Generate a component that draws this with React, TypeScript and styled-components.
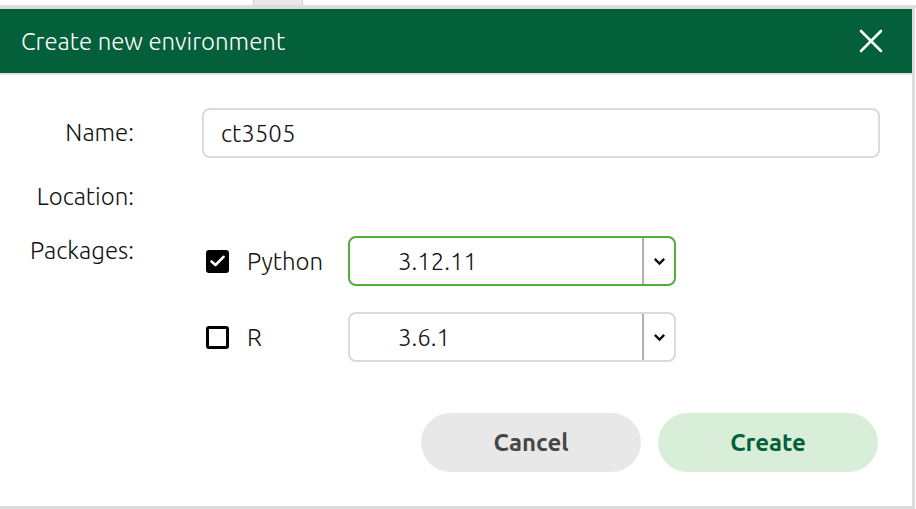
import { useState } from 'react'
import styled, { createGlobalStyle } from 'styled-components'

const GlobalStyle = createGlobalStyle`
  html, body {
    margin: 0;
    padding: 0;
    background: #ffffff;
    overflow: hidden;
  }
  body {
    font-family: Ubuntu, "Open Sans", "Noto Sans", sans-serif;
    color: #1b1b1b;
  }
  * {
    box-sizing: border-box;
  }
`

// Page that sits behind the modal, only its edges show
const Page = styled.div`
  position: relative;
  width: 916px;
  height: 509px;
  background: #ffffff;
`

const PageTopBar = styled.div`
  display: flex;
  height: 8px;
  padding-left: 253px;
  border-bottom: 3px solid #dcdcdc;
`

const PageTab = styled.div`
  width: 50px;
  height: 100%;
  background: #e8e8e8;
  border-left: 1px solid #d0d0d0;
  border-right: 1px solid #d0d0d0;
`

const PageSide = styled.div`
  position: absolute;
  top: 0;
  right: 0;
  width: 4px;
  height: 100%;
  display: flex;
  flex-direction: column;
  gap: 60px;
  padding-top: 200px;
`

const SideMark = styled.div<{ $color: string }>`
  width: 3px;
  height: 9px;
  background: ${({ $color }) => $color};
`

const Dialog = styled.div`
  position: absolute;
  top: 6px;
  left: -3px;
  width: 918px;
  height: 503px;
  display: flex;
  flex-direction: column;
  background: #ffffff;
  border: 3px solid #dcdcdc;
`

const Header = styled.div`
  display: flex;
  align-items: center;
  justify-content: space-between;
  height: 66px;
  padding: 0 28px 0 21px;
  background: #03603a;
  border-bottom: 2px solid #e2e2e2;
`

const Title = styled.h1`
  margin: 0;
  font-size: 24px;
  font-weight: 300;
  color: #ffffff;
`

const CloseButton = styled.button`
  display: flex;
  align-items: center;
  justify-content: center;
  width: 26px;
  height: 26px;
  padding: 0;
  border: none;
  background: transparent;
  cursor: pointer;
`

const Body = styled.div`
  display: flex;
  flex-direction: column;
  flex: 1;
  padding: 33px 32px 0 0;
`

const FieldRow = styled.div<{ $gapTop: number }>`
  display: grid;
  grid-template-columns: 134px 1fr;
  column-gap: 68px;
  align-items: center;
  margin-top: ${({ $gapTop }) => $gapTop}px;
`

const Label = styled.div<{ $alignTop?: boolean }>`
  text-align: right;
  font-size: 24px;
  font-weight: 300;
  line-height: 30px;
  color: #111111;
  align-self: ${({ $alignTop }) => ($alignTop ? 'start' : 'center')};
`

const TextInput = styled.input`
  height: 50px;
  width: 100%;
  padding: 0 17px;
  border: 2px solid #dadada;
  border-radius: 8px;
  font-family: inherit;
  font-size: 24px;
  font-weight: 300;
  color: #111111;
  outline: none;
`

const PackageList = styled.div`
  display: flex;
  flex-direction: column;
  gap: 26px;
`

const PackageRow = styled.div`
  display: grid;
  grid-template-columns: 146px 328px;
  align-items: center;
`

const CheckLabel = styled.label`
  display: flex;
  align-items: center;
  gap: 18px;
  padding-left: 4px;
  font-size: 24px;
  font-weight: 300;
  color: #111111;
  cursor: pointer;
`

const Box = styled.span<{ $checked: boolean }>`
  display: flex;
  align-items: center;
  justify-content: center;
  width: 23px;
  height: 23px;
  border-radius: 3px;
  border: 3px solid #000000;
  background: ${({ $checked }) => ($checked ? '#000000' : '#ffffff')};
`

const Select = styled.div<{ $focused: boolean }>`
  display: flex;
  height: 50px;
  border: 2px solid ${({ $focused }) => ($focused ? '#4fae3c' : '#dadada')};
  border-radius: 8px;
  overflow: hidden;
`

const SelectValue = styled.div`
  flex: 1;
  display: flex;
  align-items: center;
  padding-left: 48px;
  font-size: 24px;
  font-weight: 300;
  color: #111111;
`

const SelectArrow = styled.div`
  display: flex;
  align-items: center;
  justify-content: center;
  width: 32px;
  border-left: 2px solid #b0b0b0;
`

const Footer = styled.div`
  display: flex;
  justify-content: flex-end;
  gap: 17px;
  margin-top: auto;
  padding-bottom: 34px;
  padding-right: 2px;
`

const Button = styled.button<{ $primary?: boolean }>`
  width: 220px;
  height: 59px;
  border: none;
  border-radius: 30px;
  font-family: inherit;
  font-size: 24px;
  font-weight: 700;
  background: ${({ $primary }) => ($primary ? '#d9eed9' : '#e8e8e8')};
  color: ${({ $primary }) => ($primary ? '#03603a' : '#464646')};
  cursor: pointer;
`

function CheckIcon() {
  return (
    <svg width="15" height="12" viewBox="0 0 15 12">
      <polyline points="1.5,6.5 5.5,10 13.5,1.8" fill="none" stroke="#ffffff" strokeWidth="2.6" strokeLinecap="round" strokeLinejoin="round" />
    </svg>
  )
}

function Checkbox({ checked, label, onToggle }: { checked: boolean; label: string; onToggle: () => void }) {
  return (
    <CheckLabel onClick={onToggle}>
      <Box $checked={checked}>{checked && <CheckIcon />}</Box>
      {label}
    </CheckLabel>
  )
}

function VersionSelect({ value, focused }: { value: string; focused?: boolean }) {
  return (
    <Select $focused={!!focused}>
      <SelectValue>{value}</SelectValue>
      <SelectArrow>
        <svg width="13" height="9" viewBox="0 0 13 9">
          <polyline points="1.8,1.8 6.5,6.5 11.2,1.8" fill="none" stroke="#111111" strokeWidth="2.4" />
        </svg>
      </SelectArrow>
    </Select>
  )
}

export default function App() {
  const [python, setPython] = useState(true)
  const [r, setR] = useState(false)

  return (
    <Page>
      <GlobalStyle />
      <PageTopBar>
        <PageTab />
      </PageTopBar>
      <PageSide>
        <SideMark $color="#3b8de0" />
        <SideMark $color="#333333" />
        <SideMark $color="#ffffff" />
        <SideMark $color="#ffffff" />
        <SideMark $color="#5a4a20" />
      </PageSide>

      <Dialog>
        <Header>
          <Title>Create new environment</Title>
          <CloseButton aria-label="Close">
            <svg width="24" height="24" viewBox="0 0 24 24">
              <path d="M2 2 L22 22 M22 2 L2 22" stroke="#ffffff" strokeWidth="2.6" strokeLinecap="round" />
            </svg>
          </CloseButton>
        </Header>

        <Body>
          <FieldRow $gapTop={0}>
            <Label>Name:</Label>
            <TextInput defaultValue="ct3505" />
          </FieldRow>

          <FieldRow $gapTop={24}>
            <Label>Location:</Label>
            <div />
          </FieldRow>

          <FieldRow $gapTop={24}>
            <Label $alignTop>Packages:</Label>
            <PackageList>
              <PackageRow>
                <Checkbox checked={python} label="Python" onToggle={() => setPython(!python)} />
                <VersionSelect value="3.12.11" focused />
              </PackageRow>
              <PackageRow>
                <Checkbox checked={r} label="R" onToggle={() => setR(!r)} />
                <VersionSelect value="3.6.1" />
              </PackageRow>
            </PackageList>
          </FieldRow>

          <Footer>
            <Button>Cancel</Button>
            <Button $primary>Create</Button>
          </Footer>
        </Body>
      </Dialog>
    </Page>
  )
}
